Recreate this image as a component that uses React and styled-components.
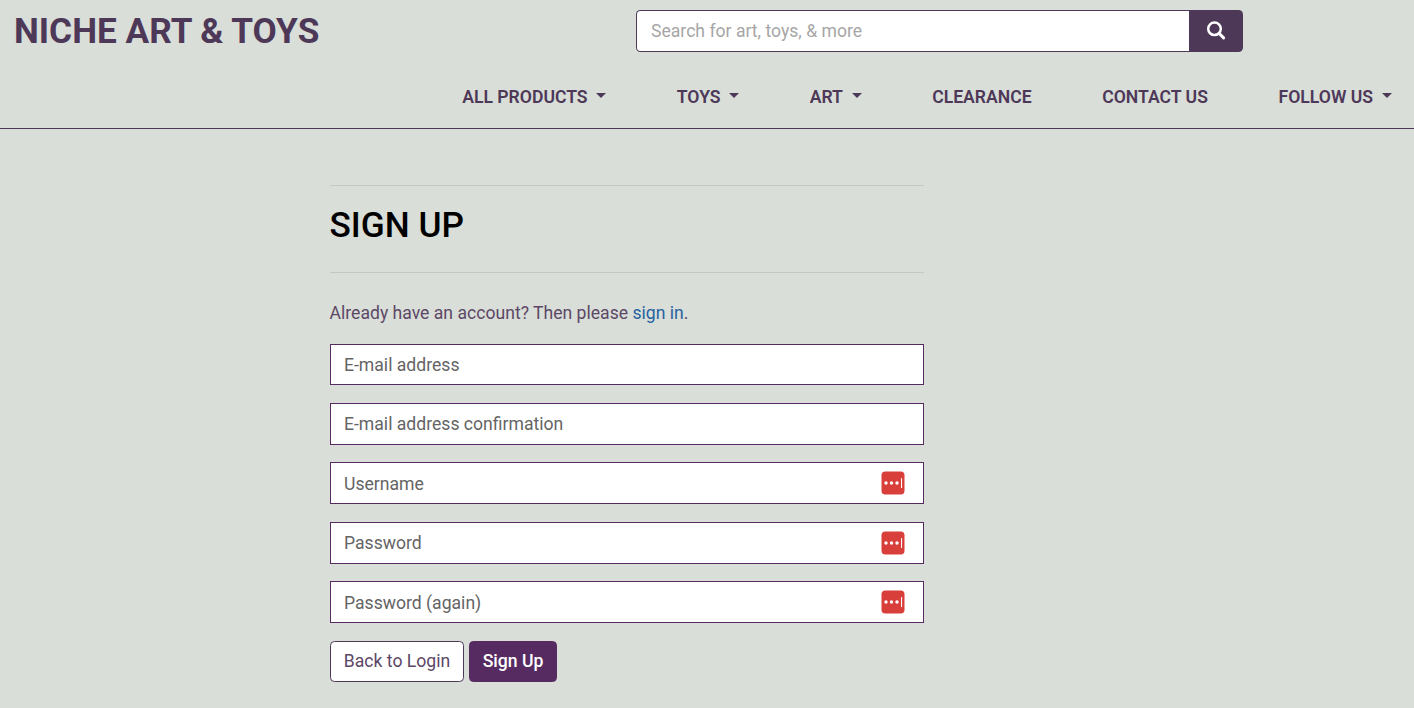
import React from "react";
import styled, { createGlobalStyle } from "styled-components";

const plum = "#4d3858";
const violet = "#562b62";

const GlobalStyle = createGlobalStyle`
  *, *::before, *::after { box-sizing: border-box; }
  html, body { margin: 0; min-height: 100%; background: #d9ded8; }
  body {
    font-family: Roboto, "Liberation Sans", sans-serif;
    font-size: 17.6px;
    line-height: 1.5;
    color: ${plum};
    overflow: hidden;
  }
`;

const Header = styled.header`
  height: 129px;
  border-bottom: 1px solid ${plum};
`;

const TopRow = styled.div`
  display: flex;
  align-items: flex-start;
  height: 76px;
  padding: 10px 0 0 14px;
`;

const Brand = styled.a`
  width: 622px;
  font-size: 35.2px;
  font-weight: 700;
  line-height: 42px;
  color: ${plum};
  text-decoration: none;
`;

const SearchForm = styled.form`
  display: flex;
  width: 607px;
  height: 42px;
  margin: 0;
`;

const SearchInput = styled.input`
  flex: 1;
  min-width: 0;
  padding: 1px 14px 0;
  border: 1px solid ${plum};
  border-right: 0;
  border-radius: 4.4px 0 0 4.4px;
  background: #fff;
  font: inherit;
  outline: 0;
  &::placeholder { color: #a6a6a6; opacity: 1; }
`;

const SearchButton = styled.button`
  display: flex;
  align-items: center;
  justify-content: center;
  width: 54px;
  padding: 0;
  border: 0;
  border-radius: 0 4.4px 4.4px 0;
  background: ${plum};
`;

const Nav = styled.nav`
  display: flex;
  justify-content: flex-end;
  gap: 70.6px;
  padding: 8px 22.4px 0 0;
`;

const NavLink = styled.a`
  font-weight: 600;
  line-height: 26px;
  white-space: nowrap;
  color: ${plum};
  text-decoration: none;
`;

const Caret = styled.span`
  display: inline-block;
  margin-left: 8.6px;
  vertical-align: 5px;
  border-top: 5px solid ${plum};
  border-right: 5.2px solid transparent;
  border-left: 5.2px solid transparent;
`;

const Main = styled.main`
  width: 594px;
  margin: 56px 0 0 330px;
`;

const Rule = styled.hr`
  height: 1px;
  margin: 0;
  border: 0;
  background: #c3c8c2;
`;

const Title = styled.h1`
  height: 86px;
  margin: 0 0 0 -0.5px;
  padding-top: 18px;
  font-size: 35.2px;
  font-weight: 460;
  line-height: 42px;
  color: #000;
`;

const Prompt = styled.p`
  margin: 27px 0 17.6px -0.5px;
  line-height: 26px;
  color: #5c4866;
`;

const SignInLink = styled.a`
  color: #2762a0;
  text-decoration: none;
`;

const Form = styled.form`
  display: flex;
  flex-direction: column;
  gap: 17.6px;
`;

const Field = styled.div`
  display: flex;
  align-items: center;
  height: 41.8px;
  padding: 0 18px 0 13px;
  border: 1px solid ${violet};
  background: #fff;
`;

const FieldInput = styled.input`
  flex: 1;
  min-width: 0;
  padding: 1.3px 0 0;
  border: 0;
  background: transparent;
  font: inherit;
  outline: 0;
  &::placeholder { color: #646464; opacity: 1; }
`;

const Actions = styled.div`
  display: flex;
  gap: 5px;
`;

const Button = styled.button`
  width: ${(p) => (p.$primary ? "88px" : "134px")};
  height: 41px;
  padding: 0;
  border: 1px solid ${(p) => (p.$primary ? violet : plum)};
  border-radius: 4.4px;
  background: ${(p) => (p.$primary ? violet : "#fff")};
  color: ${(p) => (p.$primary ? "#fff" : "#5c4866")};
  font: inherit;
  font-weight: ${(p) => (p.$primary ? 500 : 400)};
  white-space: nowrap;
`;

const SearchIcon = () => (
  <svg width="20" height="20" viewBox="0 0 20 20" fill="none" stroke="#fff">
    <circle cx="8.5" cy="7.8" r="6.3" strokeWidth="2.5" />
    <path d="M13 12.3 17.6 16.9" strokeWidth="3" strokeLinecap="round" />
  </svg>
);

const VaultIcon = () => (
  <svg width="24" height="24" viewBox="0 0 24 24">
    <rect x="0.5" y="0.5" width="23" height="23" rx="3.8" fill="#d93f3a" />
    <circle cx="5" cy="12" r="1.7" fill="#fff" />
    <circle cx="10.5" cy="12" r="1.7" fill="#fff" />
    <circle cx="16" cy="12" r="1.7" fill="#fff" />
    <rect x="20" y="7" width="1.1" height="10" rx="0.5" fill="#fff" />
  </svg>
);

const links = [
  { label: "ALL PRODUCTS", menu: true },
  { label: "TOYS", menu: true },
  { label: "ART", menu: true },
  { label: "CLEARANCE" },
  { label: "CONTACT US" },
  { label: "FOLLOW US", menu: true },
];

const fields = [
  { label: "E-mail address", type: "email" },
  { label: "E-mail address confirmation", type: "email" },
  { label: "Username", type: "text", vault: true },
  { label: "Password", type: "password", vault: true },
  { label: "Password (again)", type: "password", vault: true },
];

export default function App() {
  return (
    <>
      <GlobalStyle />
      <Header>
        <TopRow>
          <Brand>NICHE ART &amp; TOYS</Brand>
          <SearchForm>
            <SearchInput placeholder="Search for art, toys, & more" />
            <SearchButton type="button" aria-label="Search">
              <SearchIcon />
            </SearchButton>
          </SearchForm>
        </TopRow>
        <Nav>
          {links.map((l) => (
            <NavLink key={l.label}>
              {l.label}
              {l.menu && <Caret />}
            </NavLink>
          ))}
        </Nav>
      </Header>
      <Main>
        <Rule />
        <Title>SIGN UP</Title>
        <Rule />
        <Prompt>
          Already have an account? Then please <SignInLink>sign in</SignInLink>.
        </Prompt>
        <Form>
          {fields.map((f) => (
            <Field key={f.label}>
              <FieldInput type={f.type} placeholder={f.label} />
              {f.vault && <VaultIcon />}
            </Field>
          ))}
          <Actions>
            <Button type="button">Back to Login</Button>
            <Button type="button" $primary>Sign Up</Button>
          </Actions>
        </Form>
      </Main>
    </>
  );
}
